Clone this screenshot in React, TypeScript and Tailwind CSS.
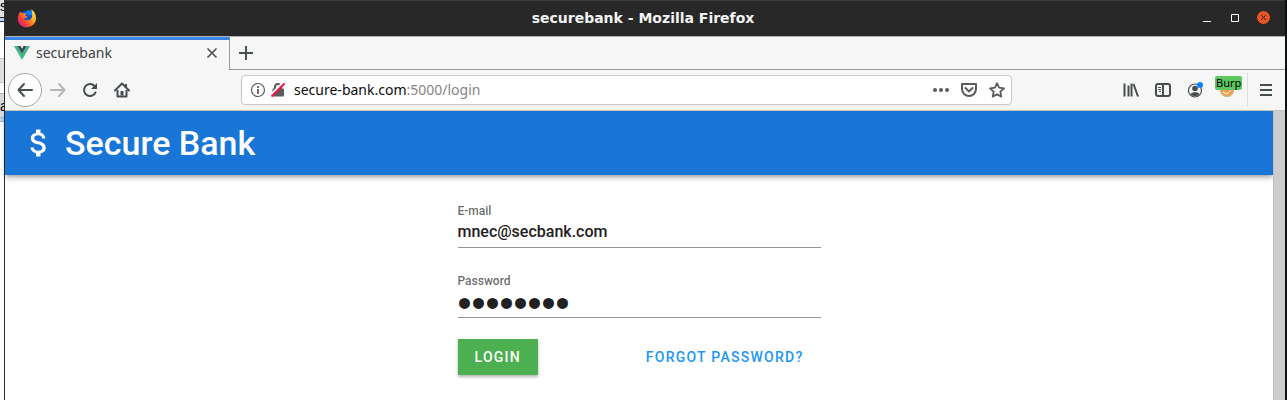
import type { ReactNode } from "react";

function IconButton({ label, className, children }: { label: string; className: string; children: ReactNode }) {
  return (
    <button type="button" aria-label={label} className={"flex shrink-0 items-center justify-center " + className}>
      {children}
    </button>
  );
}

function FirefoxLogo() {
  return (
    <svg width="20" height="20" viewBox="0 0 20 20" className="shrink-0">
      <defs>
        <linearGradient id="fox" x1="1" y1="0.1" x2="0.1" y2="0.9">
          <stop offset="0" stopColor="#fff04a" />
          <stop offset="0.4" stopColor="#ffa51a" />
          <stop offset="0.7" stopColor="#fb4a36" />
          <stop offset="1" stopColor="#d8157a" />
        </linearGradient>
      </defs>
      <circle cx="10" cy="10.5" r="8" fill="#1b4fc4" />
      <path d="M10 2.500c2.500-1 5 .5 6 2l-2 3-4-1z" fill="#0a84ff" />
      <path d="M3 3.500 2 6C.500 8.500.500 11 1.200 13.500 3 18 6.500 19.500 10.500 19.200 16 18.800 19 14.500 19 10 19 6 17 3 14 1c.5 1.500 1.300 2.500 1 5 .8 3-1 6.500-4.500 6.300-2 0-3.500-1-4-2.300 1 .7 2.500.3 3.500-.6.8-.5.500-1-.2-1.100-1.300-.1-2-.2-1.500-1.600L10 5.500C8 5 7 5 5.800 5.500 4.800 4.800 3.600 4.800 3 3.500z" fill="url(#fox)" />
    </svg>
  );
}

function TitleBar() {
  return (
    <header className="flex h-9 items-center border-t border-[#3c3c3c] bg-[#282828] pr-4 pb-0.5 pl-3">
      <div className="flex flex-1"><FirefoxLogo /></div>
      <h1 className="font-['DejaVu_Sans',sans-serif] text-sm leading-4 font-bold text-[#f3f3f3]">securebank - Mozilla Firefox</h1>
      <div className="flex flex-1 items-center justify-end gap-4">
        <IconButton label="Minimize" className="size-3">
          <svg width="12" height="12"><path d="M2 9.500h8" stroke="#fff" /></svg>
        </IconButton>
        <IconButton label="Maximize" className="size-3">
          <svg width="12" height="12"><path d="M2.500 2.500h7v7h-7z" stroke="#fff" fill="none" /></svg>
        </IconButton>
        <IconButton label="Close" className="size-3">
          <svg width="13" height="13" viewBox="0 0 13 13" className="shrink-0"><circle cx="6.5" cy="6.5" r="6.5" fill="#e95420" /><path d="m4 4 5 5m0-5-5 5" stroke="#282828" /></svg>
        </IconButton>
      </div>
    </header>
  );
}

function TabStrip() {
  return (
    <div className="flex h-[34px] border-t border-[#b4b4b4] text-[#3b4144]">
      <div className="flex w-[225px] items-center border-t-3 border-r border-t-[#3a86e8] border-r-[#9a9a9a] pr-[7px] pb-1 pl-2">
        <svg width="18" height="16" viewBox="0 0 18 16" className="shrink-0">
          <path d="M1 1h3.500L9 9l4.500-8H17L9 15z" fill="#41b883" />
          <path d="M4.500 1h3L9 3.700 10.500 1h3L9 9z" fill="#35495e" />
        </svg>
        <span className="flex-1 pl-[5px] font-['Noto_Sans',sans-serif] text-sm">securebank</span>
        <IconButton label="Close tab" className="size-5">
          <svg width="12" height="12"><path d="m1.500 1.500 9 9m0-9-9 9" stroke="#4a5052" strokeWidth="1.600" /></svg>
        </IconButton>
      </div>
      <div className="flex flex-1 items-center border-b border-[#9a9a9a] pl-2">
        <IconButton label="New tab" className="size-4">
          <svg width="16" height="16"><path d="M8 1v14M1 8h14" stroke="#4a5052" strokeWidth="2" /></svg>
        </IconButton>
      </div>
    </div>
  );
}

function Toolbar() {
  return (
    <nav className="flex h-[41px] items-center border-b border-[#c9c4c0] pl-[3px] text-[#474e50]">
      <IconButton label="Back" className="size-[34px] rounded-full border border-[#a6a6a6] bg-white">
        <svg width="16" height="16" fill="none" stroke="currentColor" strokeWidth="2" strokeLinecap="round" strokeLinejoin="round"><path d="M15 8H1.500M7 2 1.500 8 7 14" /></svg>
      </IconButton>
      <IconButton label="Forward" className="size-8 text-[#b4b5b5]">
        <svg width="16" height="16" fill="none" stroke="currentColor" strokeWidth="2" strokeLinecap="round" strokeLinejoin="round"><path d="M1 8h13.500M9 2l5.500 6L9 14" /></svg>
      </IconButton>
      <IconButton label="Reload" className="size-8">
        <svg width="16" height="16" fill="none" stroke="currentColor" strokeWidth="2"><path d="M13.500 10.500A6 6 0 1 1 12.500 4" strokeLinecap="round" /><path d="M15 1v6H9z" fill="currentColor" stroke="none" /></svg>
      </IconButton>
      <IconButton label="Home" className="size-8">
        <svg width="16" height="16" fill="none" stroke="currentColor" strokeWidth="2" strokeLinejoin="round"><path d="M1 8.500 8 1.500l7 7" strokeLinecap="round" /><path d="M3.500 8v6.500h9V8" /><path d="M8 9v4.500" strokeWidth="3" /><path d="M12 2v3" /></svg>
      </IconButton>
      <div className="mr-[103px] ml-[103px] flex h-[30px] flex-1 items-center rounded border border-[#cfc8c4] bg-white pr-1.5 pl-2 text-[#5b5b5b] shadow-xs">
        <svg width="16" height="16" fill="none" stroke="currentColor" className="shrink-0"><circle cx="8" cy="8" r="6.5" strokeWidth="1.200" /><path d="M8 7v5M8 4v2" strokeWidth="1.800" /></svg>
        <svg width="16" height="16" fill="none" className="ml-1 shrink-0"><path d="M5 7V5a3 3 0 0 1 6 0v2" stroke="currentColor" strokeWidth="2" /><rect x="2.5" y="6.5" width="11.5" height="8" rx="1" fill="currentColor" /><path d="M1 12.500 12.500 1" stroke="#fff" strokeWidth="2" /><path d="M1.500 14.500 14.500 1.500" stroke="#ff0f46" strokeWidth="2" /></svg>
        <div className="flex-1 pl-2 font-['Noto_Sans',sans-serif] text-sm text-[#0c0c0d]">secure-bank.com<span className="text-[#858585]">:5000/login</span></div>
        <div className="flex gap-3">
          <IconButton label="Page actions" className="size-4"><svg width="18" height="16" viewBox="0 0 18 16" fill="currentColor" className="shrink-0"><circle cx="3" cy="8" r="2" /><circle cx="9" cy="8" r="2" /><circle cx="15" cy="8" r="2" /></svg></IconButton>
          <IconButton label="Save to Pocket" className="size-4"><svg width="16" height="16" fill="none" stroke="currentColor" strokeWidth="2" strokeLinejoin="round"><path d="M1 2h14v5a7 7 0 0 1-14 0z" /><path d="m4.500 6 3.500 3.500L11.500 6" strokeLinecap="round" /></svg></IconButton>
          <IconButton label="Bookmark" className="size-4"><svg width="16" height="16" fill="none" stroke="currentColor" strokeWidth="1.800" strokeLinejoin="round"><path d="m8 1.200 2 4.500 5 .6-3.700 3.300 1 5L8 12.200l-4.300 2.400 1-5L1 6.300l5-.6z" /></svg></IconButton>
        </div>
      </div>
      <IconButton label="Library" className="size-8"><svg width="16" height="16" fill="none" stroke="currentColor" strokeWidth="2"><path d="M1.500 1.500v13M5.500 3.500v11M8.500 1.500v13M10.500 2 15 14.500" /></svg></IconButton>
      <IconButton label="Sidebars" className="size-8"><svg width="16" height="16" fill="none" stroke="currentColor"><rect x="1" y="2" width="14" height="12" rx="2" strokeWidth="2" /><path d="M8 2v12" strokeWidth="2" /><path d="M3 5.500h3M3 7.500h3M4 9.500h2" /></svg></IconButton>
      <IconButton label="Account" className="size-8"><svg width="16" height="16" fill="none"><circle cx="8" cy="8.5" r="6.5" stroke="currentColor" strokeWidth="1.200" /><circle cx="8" cy="6.5" r="2.8" fill="currentColor" /><path d="M3.500 12c1-2.500 8-2.500 9 0-2 3-7 3-9 0z" fill="currentColor" /><circle cx="13" cy="3" r="3" fill="#0a84ff" /></svg></IconButton>
      <button type="button" className="relative flex size-8 items-center justify-center">
        <svg width="16" height="16"><circle cx="8" cy="8" r="7" fill="#f4a04a" /><circle cx="8" cy="8" r="6.5" fill="none" stroke="#c9b7a5" /><path d="m4 10 4 2 4-4" stroke="#fff" fill="none" /></svg>
        <span className="absolute top-0.5 left-1 rounded-xs bg-[#5fc75f] px-px font-['Noto_Sans',sans-serif] text-[11px] leading-[14px] text-black">Burp</span>
      </button>
      <div className="ml-1 flex h-[34px] items-center border-l border-[#dedede] pr-[3px] pl-0.5">
        <IconButton label="Open menu" className="size-8"><svg width="16" height="16"><path d="M2 3h12M2 8h12M2 13h12" stroke="currentColor" strokeWidth="2" /></svg></IconButton>
      </div>
    </nav>
  );
}

function Page() {
  return (
    <main className="flex-1 bg-white font-[Roboto,sans-serif]">
      <div className="flex h-16 items-center bg-[#1976d6] pl-4 text-white shadow-[0_2px_4px_-1px_rgba(0,0,0,0.3),0_4px_5px_rgba(0,0,0,0.14)]">
        <svg width="36" height="36" viewBox="0 0 24 24" className="shrink-0" fill="currentColor"><path d="M11.800 10.900c-2.270-.59-3-1.200-3-2.150 0-1.090 1.010-1.850 2.700-1.850 1.780 0 2.440.85 2.500 2.100h2.210c-.07-1.720-1.120-3.300-3.210-3.810V3h-3v2.160c-1.940.42-3.500 1.680-3.500 3.610 0 2.310 1.910 3.460 4.700 4.130 2.500.6 3 1.480 3 2.410 0 .69-.49 1.790-2.700 1.790-2.060 0-2.870-.92-2.980-2.100h-2.200c.12 2.190 1.760 3.420 3.680 3.830V21h3v-2.150c1.950-.37 3.500-1.500 3.500-3.550 0-2.840-2.430-3.810-4.700-4.400z" /></svg>
        <h2 className="pl-2 text-[34px] leading-10 font-medium">Secure Bank</h2>
      </div>
      <form className="mx-auto w-[363px] pt-7" onSubmit={(e) => e.preventDefault()}>
        <label htmlFor="email" className="block text-xs leading-4 font-medium text-black/60">E-mail</label>
        <input id="email" type="email" defaultValue="mnec@secbank.com" className="block h-[29px] w-full border-b border-[#949494] pb-[3px] text-base font-medium text-[#212121] outline-none" />
        <label htmlFor="password" className="mt-[25px] block text-xs leading-4 font-medium text-black/60">Password</label>
        <input id="password" type="password" defaultValue="password" className="block h-[29px] w-full border-b border-[#949494] font-['Liberation_Sans',sans-serif] text-[40px] text-[#212121] outline-none" />
        <div className="mt-[21px] flex items-center justify-between text-sm font-medium tracking-[0.09em] uppercase">
          <button type="submit" className="h-9 bg-[#4caf50] px-[17px] text-white uppercase shadow-[0_2px_3px_rgba(0,0,0,0.3)]">Login</button>
          <a href="#forgot" className="px-[17px] text-[#2196f3]">Forgot password?</a>
        </div>
      </form>
    </main>
  );
}

export default function App() {
  return (
    <div className="flex min-h-screen bg-white">
      <aside className="flex w-1 shrink-0 flex-col overflow-hidden font-['Liberation_Sans',sans-serif] text-sm leading-3 text-black">
        <div className="h-[18px] border-b border-[#1c2b40] bg-[#dfe2e6]">s</div>
        <div className="h-1 border-b border-[#1c2b40] bg-[#b9d3ea]" />
        <div className="h-9 bg-white" />
        <div className="h-[25px] border-y border-[#c3c8cc] bg-[#dde1e3]" />
        <div className="h-[10px]" />
        <div className="h-[25px] border-y border-[#a8b8c8] bg-[#d5dade] pt-1.5">a</div>
        <div className="h-1 border-b border-[#a8b8c8] bg-[#b9d3ea]" />
      </aside>
      <div className="flex min-w-0 flex-1 flex-col border-r-2 border-l border-r-[#0b1216] border-l-[#2c2c2c] bg-[#f6f6f6]">
        <TitleBar />
        <TabStrip />
        <Toolbar />
        <div className="flex flex-1">
          <Page />
          <div className="w-3 border-l border-[#c2bcbc] bg-[#cdcdcd]" />
        </div>
      </div>
    </div>
  );
}
